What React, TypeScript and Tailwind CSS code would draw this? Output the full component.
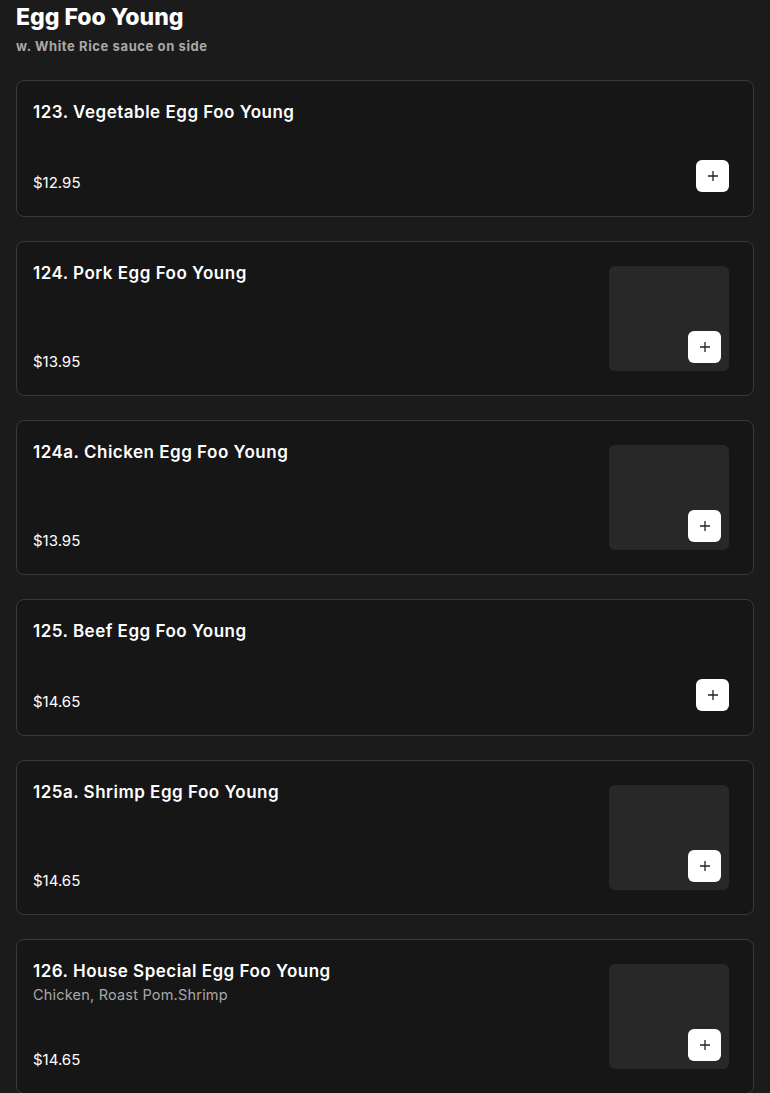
const items = [
  { name: "123. Vegetable Egg Foo Young", price: "$12.95", image: false },
  { name: "124. Pork Egg Foo Young", price: "$13.95", image: true },
  { name: "124a. Chicken Egg Foo Young", price: "$13.95", image: true },
  { name: "125. Beef Egg Foo Young", price: "$14.65", image: false },
  { name: "125a. Shrimp Egg Foo Young", price: "$14.65", image: true },
  { name: "126. House Special Egg Foo Young", desc: "Chicken, Roast Pom.Shrimp", price: "$14.65", image: true },
];

function PlusButton() {
  return (
    <button className="flex h-8 w-[33px] items-center justify-center rounded-md bg-white">
      <svg width="12" height="12" viewBox="0 0 12 12" fill="none" stroke="#222" strokeWidth="1.3">
        <path d="M6 1v10M1 6h10" />
      </svg>
    </button>
  );
}

function MenuItem({ name, desc, price, image }: { name: string; desc?: string; price: string; image: boolean }) {
  return (
    <div className="flex rounded-lg border border-[#3a3a3a] bg-[#161616] py-6 pl-4 pr-6">
      <div className="flex min-h-[87px] flex-1 flex-col justify-between">
        <div className="-mt-[3px]">
          <div className="text-[17px] font-semibold leading-5 tracking-[0.5px] text-white">{name}</div>
          {desc && <div className="mt-1 text-[14.5px] leading-5 tracking-[0.2px] text-[#a8a8a8]">{desc}</div>}
        </div>
        <div className="text-[15px] leading-[18px] text-white">{price}</div>
      </div>
      {image ? (
        <div className="flex h-[105px] w-[120px] items-end justify-end rounded-md bg-[#282828] p-2">
          <PlusButton />
        </div>
      ) : (
        <div className="flex items-end">
          <PlusButton />
        </div>
      )}
    </div>
  );
}

export default function App() {
  return (
    <div className="min-h-[1093px] bg-[#1b1b1b] px-4 font-['Inter',sans-serif]">
      <h1 className="text-[23px] font-extrabold leading-[34px] text-white">Egg Foo Young</h1>
      <p className="mt-0.5 text-[13px] font-bold leading-5 tracking-[0.6px] text-[#a9a9a9]">w. White Rice sauce on side</p>
      <div className="mt-6 flex flex-col gap-6">
        {items.map((it) => (
          <MenuItem key={it.name} {...it} />
        ))}
      </div>
    </div>
  );
}
